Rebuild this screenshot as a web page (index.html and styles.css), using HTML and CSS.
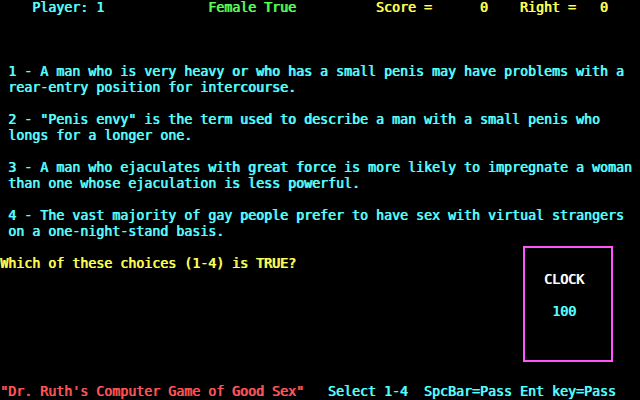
FILE: index.html
```html
<!DOCTYPE html>
<html>
<head>
<meta charset="utf-8">
<link rel="stylesheet" href="styles.css">
</head>
<body>
<div class="screen">
  <header class="status"><span class="cyan">    Player: 1</span><span class="green">             Female True</span><span class="yellow">          Score =      0    Right =   0</span></header>
  <ol class="questions">
    <li>1 - A man who is very heavy or who has a small penis may have problems with a<br>rear-entry position for intercourse.</li>
    <li>2 - "Penis envy" is the term used to describe a man with a small penis who<br>longs for a longer one.</li>
    <li>3 - A man who ejaculates with great force is more likely to impregnate a woman<br>than one whose ejaculation is less powerful.</li>
    <li>4 - The vast majority of gay people prefer to have sex with virtual strangers<br>on a one-night-stand basis.</li>
  </ol>
  <div class="lower">
    <p class="prompt">Which of these choices (1-4) is TRUE?</p>
    <div class="clock">
      <div class="clock-label">CLOCK</div>
      <div class="clock-value">100</div>
    </div>
  </div>
  <footer class="footer"><span class="red">"Dr. Ruth's Computer Game of Good Sex"</span><span class="cyan">   Select 1-4  SpcBar=Pass Ent key=Pass</span></footer>
</div>
</body>
</html>
```
FILE: styles.css
```css
html, body {
  margin: 0;
  padding: 0;
  background: #000;
}
.screen {
  width: 640px;
  height: 400px;
  display: flex;
  flex-direction: column;
  font-family: "DejaVu Sans Mono", monospace;
  font-weight: normal;
  font-size: 13.3px;
  line-height: 16px;
  letter-spacing: -0.01px;
  color: #55ffff;
  overflow: hidden;
}
.cyan { color: #55ffff; }
.green { color: #55ff55; }
.yellow { color: #ffff55; }
.red { color: #ff5555; }
.status, .questions, .prompt, .clock, .footer {
  text-shadow: 0.8px 0 0 currentColor;
}
.status {
  white-space: pre;
  height: 16px;
}
.questions {
  list-style: none;
  margin: 48px 0 0 0;
  padding: 0 0 0 8px;
  display: flex;
  flex-direction: column;
  gap: 16px;
  white-space: pre;
}
.lower {
  display: flex;
  justify-content: space-between;
  align-items: flex-start;
}
.prompt {
  margin: 16px 0 0 0;
  color: #ffff55;
}
.clock {
  box-sizing: border-box;
  width: 90px;
  height: 116px;
  margin: 6px 27px 0 0;
  border: 2px solid #ff55ff;
  padding: 24px 0 0 19px;
  display: flex;
  flex-direction: column;
  gap: 16px;
}
.clock-label { color: #ffffff; }
.clock-value { color: #55ffff; margin-left: 8px; }
.footer {
  margin-top: auto;
  margin-bottom: 0;
  height: 16px;
  white-space: pre;
}
```
